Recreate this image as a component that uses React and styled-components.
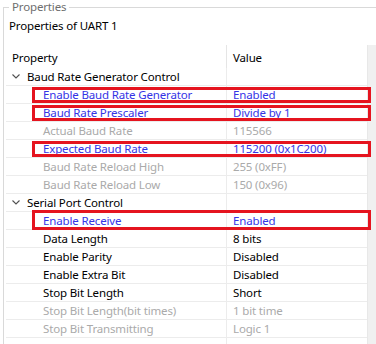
import styled, { createGlobalStyle } from 'styled-components';

const Global = createGlobalStyle`
  html, body {
    margin: 0;
    padding: 0;
    background: #fff;
    overflow: hidden;
  }
  body {
    font-family: 'Noto Sans', 'Open Sans', sans-serif;
    font-size: 11.5px;
    letter-spacing: -0.15px;
    color: #000;
  }
`;

const Page = styled.div`
  width: 376px;
  height: 344px;
  overflow: hidden;
`;

const Group = styled.fieldset`
  margin: 1px 0 0 3px;
  padding: 0;
  border: 1px solid #d9d9d9;
  border-right: none;
  width: 400px;
  min-height: 360px;
  box-sizing: border-box;
`;

const Legend = styled.legend`
  margin-left: 5px;
  padding: 0 3px;
  line-height: 12px;
  color: #6e6e6e;
`;

const Subtitle = styled.div`
  padding-left: 5px;
  margin-top: 5px;
  line-height: 16px;
`;

const Tree = styled.div`
  margin: 11px 0 0 2px;
  width: 370px;
  display: grid;
  grid-template-columns: 361px 9px;
`;

const Table = styled.div`
  display: flex;
  flex-direction: column;
`;

const Scroll = styled.div`
  background: #f0f0f0;
  border-left: 1px solid #e8e8e8;
`;

const Header = styled.div`
  display: grid;
  grid-template-columns: 220px 141px;
  height: 23px;
  align-items: center;
`;

const HeadCell = styled.div`
  padding-left: 6px;
  height: 100%;
  display: flex;
  align-items: center;
  border-left: ${p => (p.$value ? '1px solid #e5e5e5' : 'none')};
  padding-top: 1px;
  box-sizing: border-box;
`;

const Row = styled.div`
  position: relative;
  display: grid;
  grid-template-columns: 220px 141px;
  height: 18px;
  border-bottom: 1px solid #ececec;
  box-sizing: border-box;
  color: ${p => (p.$tone === 'blue' ? '#3434e6' : p.$tone === 'gray' ? '#aaaaaa' : '#000')};

  ${p => p.$marked && `
    &::after {
      content: '';
      position: absolute;
      left: 26px;
      right: -4px;
      top: ${p.$big ? -2 : 1}px;
      bottom: ${p.$big ? -1 : 0}px;
      border: 3px solid #e5141f;
      pointer-events: none;
    }
  `}
`;

const NameCell = styled.div`
  display: flex;
  align-items: center;
  gap: 7px;
  padding-left: ${p => (p.$group ? 6 : 37)}px;
  white-space: nowrap;
`;

const ValueCell = styled.div`
  display: flex;
  align-items: center;
  padding-left: 6px;
  border-left: 1px solid #ececec;
  white-space: nowrap;
`;

const Chevron = () => (
  <svg width="8" height="5" viewBox="0 0 8 5">
    <polyline points="0.5,0.5 4,4 7.5,0.5" fill="none" stroke="#505050" strokeWidth="1.1" />
  </svg>
);

const rows = [
  { group: 'Baud Rate Generator Control' },
  { name: 'Enable Baud Rate Generator', value: 'Enabled', tone: 'blue', marked: true },
  { name: 'Baud Rate Prescaler', value: 'Divide by 1', tone: 'blue', marked: true },
  { name: 'Actual Baud Rate', value: '115566', tone: 'gray' },
  { name: 'Expected Baud Rate', value: '115200 (0x1C200)', tone: 'blue', marked: true },
  { name: 'Baud Rate Reload High', value: '255 (0xFF)', tone: 'gray' },
  { name: 'Baud Rate Reload Low', value: '150 (0x96)', tone: 'gray' },
  { group: 'Serial Port Control' },
  { name: 'Enable Receive', value: 'Enabled', tone: 'blue', marked: true, big: true },
  { name: 'Data Length', value: '8 bits' },
  { name: 'Enable Parity', value: 'Disabled' },
  { name: 'Enable Extra Bit', value: 'Disabled' },
  { name: 'Stop Bit Length', value: 'Short' },
  { name: 'Stop Bit Length(bit times)', value: '1 bit time', tone: 'gray' },
  { name: 'Stop Bit Transmitting', value: 'Logic 1', tone: 'gray' },
  { name: '', value: '' },
];

export default function App() {
  return (
    <Page>
      <Global />
      <Group>
        <Legend>Properties</Legend>
        <Subtitle>Properties of UART 1</Subtitle>
        <Tree>
          <Table>
            <Header>
              <HeadCell>Property</HeadCell>
              <HeadCell $value>Value</HeadCell>
            </Header>
            {rows.map((r, i) =>
              r.group ? (
                <Row key={i}>
                  <NameCell $group>
                    <Chevron />
                    {r.group}
                  </NameCell>
                  <ValueCell />
                </Row>
              ) : (
                <Row key={i} $tone={r.tone} $marked={r.marked} $big={r.big}>
                  <NameCell>{r.name}</NameCell>
                  <ValueCell>{r.value}</ValueCell>
                </Row>
              )
            )}
          </Table>
          <Scroll />
        </Tree>
      </Group>
    </Page>
  );
}
